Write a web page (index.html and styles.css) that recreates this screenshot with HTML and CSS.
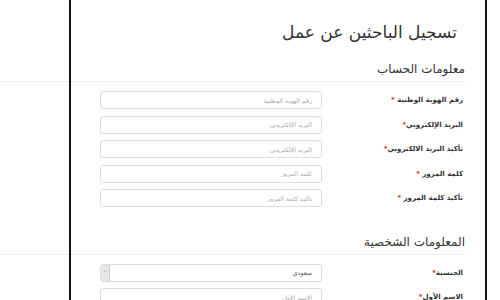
FILE: index.html
```html
<!DOCTYPE html>
<html lang="ar" dir="rtl">
<head>
    <meta charset="UTF-8">
    <title>تسجيل الباحثين عن عمل</title>
    <link rel="stylesheet" href="styles.css">
</head>
<body>
    <div class="frame"></div>
    <div class="page">
        <h1 class="title">تسجيل الباحثين عن عمل</h1>

        <h2 class="section">معلومات الحساب</h2>
        <div class="form">
            <div class="row">
                <label class="label">رقم الهوية الوطنية <span class="req">*</span></label>
                <input class="field" type="text" placeholder="رقم الهوية الوطنية">
            </div>
            <div class="row">
                <label class="label">البريد الإلكتروني<span class="req">*</span></label>
                <input class="field" type="text" placeholder="البريد الإلكتروني">
            </div>
            <div class="row">
                <label class="label">تأكيد البريد الالكتروني<span class="req">*</span></label>
                <input class="field" type="text" placeholder="البريد الإلكتروني">
            </div>
            <div class="row">
                <label class="label">كلمة المرور <span class="req">*</span></label>
                <input class="field" type="password" placeholder="كلمة المرور">
            </div>
            <div class="row">
                <label class="label">تأكيد كلمة المرور <span class="req">*</span></label>
                <input class="field" type="password" placeholder="تأكيد كلمة المرور">
            </div>
        </div>

        <h2 class="section section-second">المعلومات الشخصية</h2>
        <div class="form">
            <div class="row">
                <label class="label">الجنسية<span class="req">*</span></label>
                <div class="field select">
                    <span>سعودي</span>
                    <span class="arrow">&#709;</span>
                </div>
            </div>
            <div class="row">
                <label class="label">الاسم الأول<span class="req">*</span></label>
                <input class="field" type="text" placeholder="الاسم الأول">
            </div>
        </div>
    </div>
</body>
</html>
```

FILE: styles.css
```css
body {
    margin: 0;
    background: #fff;
    font-family: "DejaVu Sans", sans-serif;
    color: #333;
    overflow: hidden;
}
.frame {
    position: absolute;
    left: 69px;
    right: 13px;
    top: -12px;
    bottom: -20px;
    border: 2px solid #151515;
    border-radius: 12px;
    pointer-events: none;
}
.page {
    padding-right: 35px;
}
.title {
    margin: 0 8px 0 0;
    padding-top: 18px;
    font-size: 17px;
    font-weight: normal;
    line-height: 28px;
    color: #333;
}
.section {
    margin: 0;
    padding: 13px 0 2px;
    font-size: 12px;
    font-weight: normal;
    line-height: 20px;
    color: #333;
    border-bottom: 1px solid #eee;
}
.section-second {
    padding-top: 18px;
}
.form {
    padding-top: 9px;
}
.row {
    display: flex;
    align-items: center;
    gap: 8px;
    height: 18px;
    margin-bottom: 6.5px;
}
.label {
    box-sizing: border-box;
    flex: 0 0 135px;
    padding-right: 2px;
    font-size: 7px;
    font-weight: bold;
    color: #333;
}
.req {
    color: #d9322c;
}
.field {
    box-sizing: border-box;
    width: 222px;
    height: 18px;
    padding: 0 9px;
    border: 1px solid #ddd;
    border-radius: 3px;
    font-family: inherit;
    font-size: 6.3px;
    color: #555;
    background: #fff;
}
.field::placeholder {
    color: #aaa;
}
.select {
    display: flex;
    align-items: center;
    justify-content: space-between;
    padding-left: 0;
}
.arrow {
    display: flex;
    align-items: center;
    justify-content: center;
    width: 8px;
    height: 16px;
    background: #e6e6e6;
    border-right: 1px solid #ccc;
    border-radius: 2px 0 0 2px;
    font-size: 6px;
    color: #888;
}
```
